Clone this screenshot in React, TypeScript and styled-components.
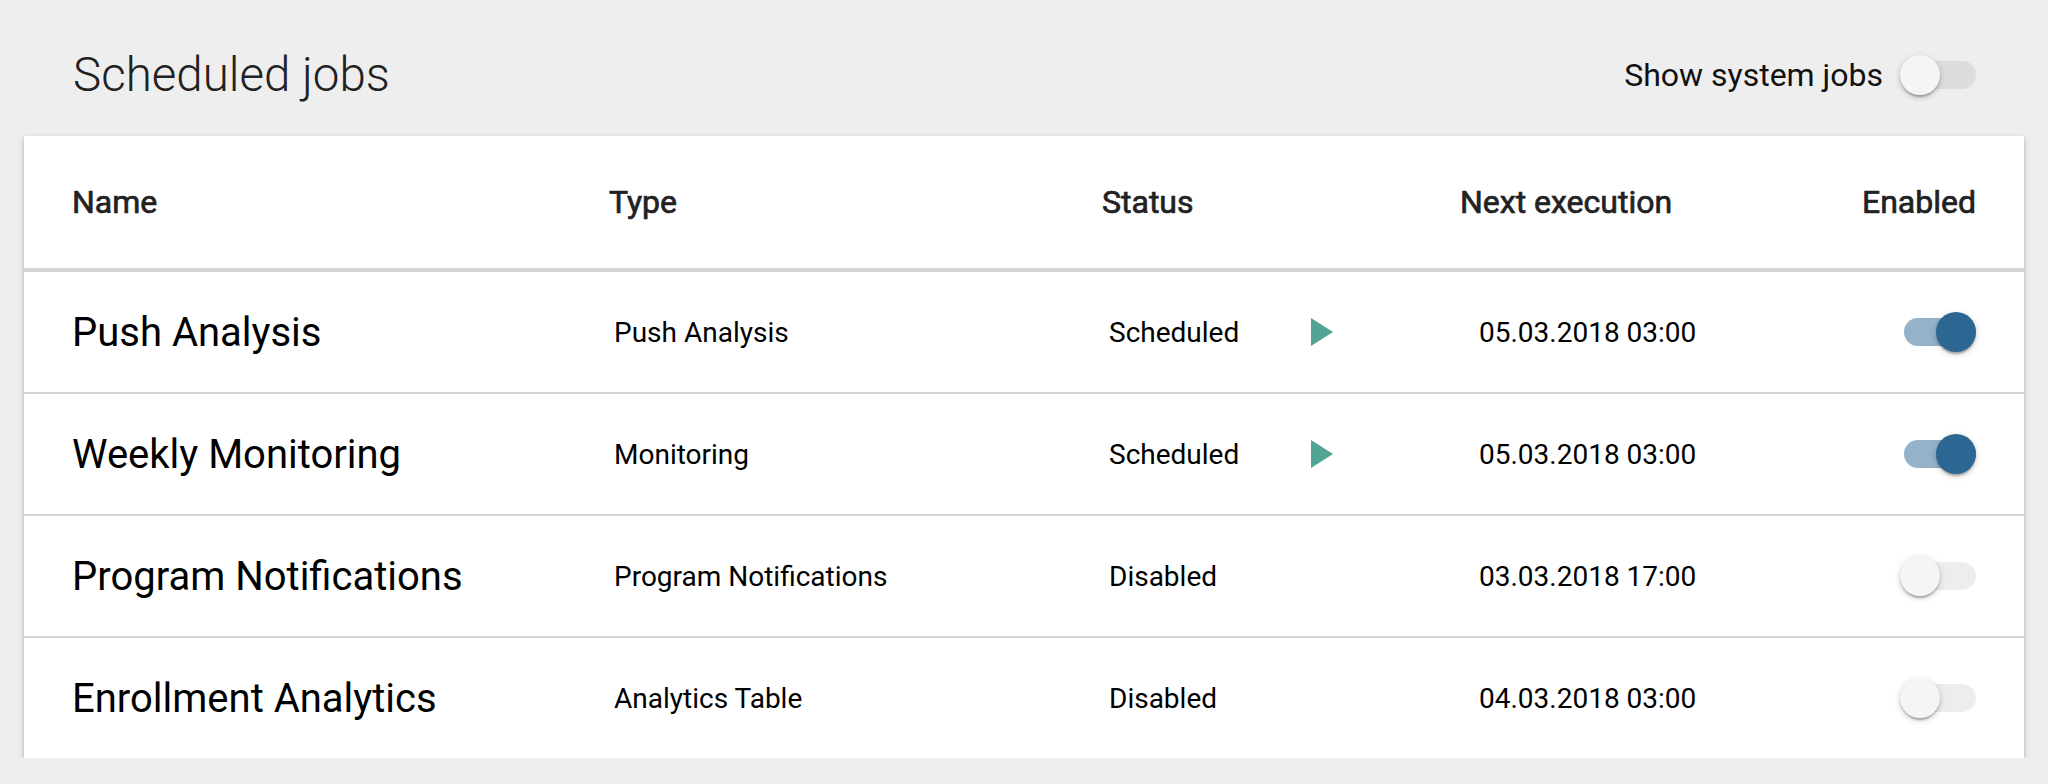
import React from "react";
import styled, { createGlobalStyle } from "styled-components";

const GlobalStyle = createGlobalStyle`
  html, body {
    margin: 0;
    padding: 0;
    background: #eeeeee;
    font-family: Roboto, "Liberation Sans", sans-serif;
  }
`;

const Page = styled.div`
  padding: 0 24px;
`;

const TopBar = styled.div`
  display: flex;
  align-items: center;
  justify-content: space-between;
  height: 56px;
  padding: 47px 48px 0 49px;
  margin-bottom: 33px;
`;

const Title = styled.h1`
  margin: 0;
  font-size: 47.5px;
  font-weight: 300;
  color: #212121;
  line-height: 56px;
`;

const SystemToggle = styled.label`
  display: flex;
  align-items: center;
  gap: 17px;
  font-size: 32px;
  color: #111;
`;

const Card = styled.div`
  background: #fff;
  box-shadow: 0 2px 6px rgba(0, 0, 0, 0.2), 0 2px 2px rgba(0, 0, 0, 0.14),
    0 4px 2px -2px rgba(0, 0, 0, 0.12);
`;

const Grid = styled.div<{ $head?: boolean; $last?: boolean }>`
  display: grid;
  grid-template-columns: 537px 493px 358px 1fr auto;
  align-items: center;
  padding: 0 48px;
  height: ${(p) => (p.$head ? "132px" : "120px")};
  border-bottom: ${(p) =>
    p.$head ? "4px solid #d6d6d6" : p.$last ? "none" : "2px solid #d2d2d2"};
`;

const HeadCell = styled.div<{ $right?: boolean }>`
  font-size: 32px;
  font-weight: 400;
  color: #222;
  -webkit-text-stroke: 0.7px #222;
  justify-self: ${(p) => (p.$right ? "end" : "start")};
`;

const Cell = styled.div<{ $inset?: number }>`
  font-size: 28px;
  color: #000;
  padding-left: ${(p) => p.$inset ?? 0}px;
  display: flex;
  align-items: center;
`;

const NameCell = styled(Cell)`
  font-size: 40px;
`;

const StatusText = styled.span`
  width: 202px;
`;

const PlayIcon = styled.svg`
  width: 22px;
  height: 28px;
  fill: #52a594;
`;

const SwitchRoot = styled.span`
  position: relative;
  display: inline-block;
  width: 76px;
  height: 40px;
  justify-self: end;
`;

const Track = styled.span<{ $on: boolean }>`
  position: absolute;
  left: 4px;
  top: 6px;
  width: 72px;
  height: 28px;
  border-radius: 14px;
  background: ${(p) => (p.$on ? "rgba(44, 102, 147, 0.5)" : "rgba(0, 0, 0, 0.07)")};
`;

const Knob = styled.span<{ $on: boolean }>`
  position: absolute;
  top: 0;
  left: ${(p) => (p.$on ? "36px" : "0")};
  width: 40px;
  height: 40px;
  border-radius: 50%;
  background: ${(p) => (p.$on ? "#2c6693" : "#f5f5f5")};
  box-shadow: 0 2px 6px rgba(0, 0, 0, 0.2), 0 2px 2px rgba(0, 0, 0, 0.14),
    0 4px 2px -2px rgba(0, 0, 0, 0.12);
`;

const Switch = ({ on }: { on: boolean }) => (
  <SwitchRoot>
    <Track $on={on} />
    <Knob $on={on} />
  </SwitchRoot>
);

type Job = {
  name: string;
  type: string;
  status: string;
  next: string;
  enabled: boolean;
};

const jobs: Job[] = [
  { name: "Push Analysis", type: "Push Analysis", status: "Scheduled", next: "05.03.2018 03:00", enabled: true },
  { name: "Weekly Monitoring", type: "Monitoring", status: "Scheduled", next: "05.03.2018 03:00", enabled: true },
  { name: "Program Notifications", type: "Program Notifications", status: "Disabled", next: "03.03.2018 17:00", enabled: false },
  { name: "Enrollment Analytics", type: "Analytics Table", status: "Disabled", next: "04.03.2018 03:00", enabled: false },
];

export default function App() {
  return (
    <Page>
      <GlobalStyle />
      <TopBar>
        <Title>Scheduled jobs</Title>
        <SystemToggle>
          Show system jobs
          <Switch on={false} />
        </SystemToggle>
      </TopBar>
      <Card>
        <Grid $head>
          <HeadCell>Name</HeadCell>
          <HeadCell>Type</HeadCell>
          <HeadCell>Status</HeadCell>
          <HeadCell>Next execution</HeadCell>
          <HeadCell $right>Enabled</HeadCell>
        </Grid>
        {jobs.map((j, i) => (
          <Grid key={j.name} $last={i === jobs.length - 1}>
            <NameCell>{j.name}</NameCell>
            <Cell $inset={5}>{j.type}</Cell>
            <Cell $inset={7}>
              <StatusText>{j.status}</StatusText>
              {j.status === "Scheduled" && (
                <PlayIcon viewBox="8 5 11 14">
                  <path d="M8 5v14l11-7z" />
                </PlayIcon>
              )}
            </Cell>
            <Cell $inset={19}>{j.next}</Cell>
            <Switch on={j.enabled} />
          </Grid>
        ))}
      </Card>
    </Page>
  );
}
